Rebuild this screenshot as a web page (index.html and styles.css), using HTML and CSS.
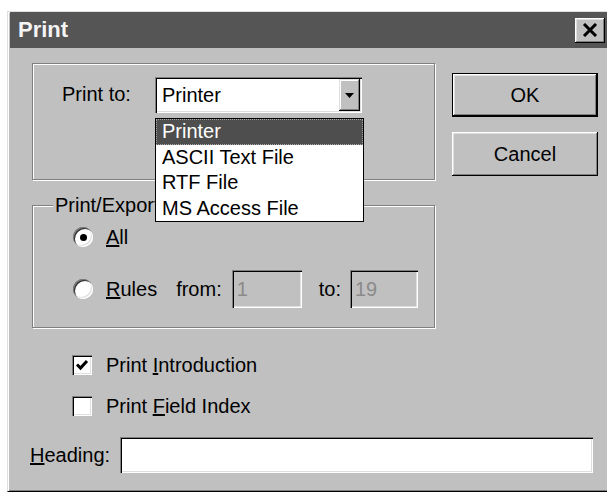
FILE: index.html
```html
<!DOCTYPE html>
<html lang="en">
<head>
<meta charset="utf-8">
<title>Print</title>
<link rel="stylesheet" href="styles.css">
</head>
<body>
<div class="dialog">
  <div class="titlebar">
    <span class="title">Print</span>
    <span class="close" aria-label="Close">
      <svg width="16" height="14" viewBox="0 0 16 14"><path d="M2 1 L14 13 M14 1 L2 13" stroke="#000" stroke-width="3" fill="none"/></svg>
    </span>
  </div>

  <div class="content">
    <div class="top-row">
      <div class="groups">
        <div class="group group-target">
          <span class="field-label">Print to:</span>
          <div class="combo">
            <span class="combo-value">Printer</span>
            <span class="combo-arrow">
              <svg width="9" height="5" viewBox="0 0 9 5"><polygon points="0,0 9,0 4.5,5" fill="#000"/></svg>
            </span>
            <ul class="combo-list">
              <li class="selected">Printer</li>
              <li>ASCII Text File</li>
              <li>RTF File</li>
              <li>MS Access File</li>
            </ul>
          </div>
        </div>

        <div class="group group-range">
          <span class="group-label">Print/Export</span>
          <div class="option-row">
            <span class="radio checked"></span>
            <span class="option-text"><u>A</u>ll</span>
          </div>
          <div class="option-row rules-row">
            <span class="radio"></span>
            <span class="option-text"><u>R</u>ules</span>
            <span class="from-label">from:</span>
            <span class="field field-disabled field-from">1</span>
            <span class="to-label">to:</span>
            <span class="field field-disabled field-to">19</span>
          </div>
        </div>
      </div>

      <div class="buttons">
        <span class="btn btn-default">OK</span>
        <span class="btn">Cancel</span>
      </div>
    </div>

    <div class="checks">
      <div class="check-row">
        <span class="checkbox">
          <svg width="14" height="14" viewBox="0 0 14 14"><polyline points="2,6.5 5.5,10 12,3" stroke="#000" stroke-width="3" fill="none"/></svg>
        </span>
        <span>Print <u>I</u>ntroduction</span>
      </div>
      <div class="check-row">
        <span class="checkbox"></span>
        <span>Print <u>F</u>ield Index</span>
      </div>
    </div>

    <div class="heading-row">
      <span class="heading-label"><u>H</u>eading:</span>
      <span class="field field-heading"></span>
    </div>
  </div>
</div>
</body>
</html>
```

FILE: styles.css
```css
* {
  box-sizing: border-box;
}

html,
body {
  margin: 0;
  overflow: hidden;
  background: #fff;
}

body {
  font-family: "Liberation Sans", Arial, sans-serif;
  font-size: 20px;
  color: #000;
}

/* window frame */
.dialog {
  width: 604px;
  height: 481px;
  margin: 11px 0 0 7px;
  padding: 0 2px;
  background: #c0c0c0;
  border: 1px solid;
  border-color: #dfdfdf #000 #000 #dfdfdf;
  box-shadow: inset 1px 1px 0 #fff, inset -1px -1px 0 #808080;
}

.titlebar {
  height: 36px;
  background: #555;
  display: flex;
  align-items: center;
  justify-content: space-between;
  padding: 0 3px 0 8px;
}

.title {
  color: #f4f4f4;
  font-weight: bold;
  font-size: 22px;
}

.close {
  width: 30px;
  height: 25px;
  display: flex;
  align-items: center;
  justify-content: center;
  background: #c0c0c0;
  box-shadow: inset -1px -1px 0 #000, inset 1px 1px 0 #fff,
    inset -2px -2px 0 #808080, inset 2px 2px 0 #dfdfdf;
}

/* body of the dialog */
.content {
  padding: 15px 0 0 22px;
}

.top-row {
  display: flex;
  align-items: flex-start;
  gap: 17px;
}

.groups {
  width: 403px;
  display: flex;
  flex-direction: column;
  gap: 25px;
}

/* etched group frame */
.group {
  position: relative;
  border: 1px solid #808080;
  box-shadow: inset 1px 1px 0 #fff, 1px 1px 0 #fff;
}

.group-target {
  height: 117px;
  padding: 13px 0 0 29px;
  display: flex;
  align-items: flex-start;
}

.field-label {
  width: 93px;
  line-height: 34px;
}

/* combo box */
.combo {
  position: relative;
  width: 207px;
  height: 36px;
  padding: 2px;
  display: flex;
  background: #fff;
  box-shadow: inset 1px 1px 0 #808080, inset 2px 2px 0 #000,
    inset -1px -1px 0 #fff, inset -2px -2px 0 #dfdfdf;
}

.combo-value {
  flex: 1;
  padding-left: 5px;
  line-height: 32px;
}

.combo-arrow {
  width: 21px;
  height: 32px;
  display: flex;
  align-items: center;
  justify-content: center;
  background: #c0c0c0;
  box-shadow: inset -1px -1px 0 #000, inset 1px 1px 0 #dfdfdf,
    inset -2px -2px 0 #808080, inset 2px 2px 0 #fff;
}

.combo-list {
  position: absolute;
  left: 0;
  top: 41px;
  width: 209px;
  margin: 0;
  padding: 0;
  list-style: none;
  background: #fff;
  border: 1px solid #000;
  z-index: 2;
}

.combo-list li {
  height: 25.5px;
  line-height: 25.5px;
  padding-left: 6px;
}

.combo-list li.selected {
  background: #4e4e4e;
  color: #fff;
  outline: 1px dotted #aaa;
  outline-offset: -1px;
}

/* range group */
.group-range {
  height: 123px;
  padding: 20px 0 0 40px;
}

.group-label {
  position: absolute;
  top: -12px;
  left: 20px;
  padding: 0 2px;
  line-height: 22px;
  background: #c0c0c0;
}

.option-row {
  display: flex;
  align-items: center;
  height: 22px;
}

.rules-row {
  height: 38px;
  margin-top: 22px;
}

.radio {
  width: 20px;
  height: 20px;
  flex: none;
  border-radius: 50%;
  display: flex;
  align-items: center;
  justify-content: center;
  background: #fff;
  box-shadow: inset 1px 1px 0 #808080, inset 2px 2px 0 #303030,
    inset -1px -1px 0 #fff, inset -2px -2px 0 #dfdfdf;
}

.radio.checked::after {
  content: "";
  width: 7px;
  height: 7px;
  border-radius: 50%;
  background: #000;
}

.option-text {
  margin-left: 13px;
}

.from-label {
  margin-left: 19px;
}

.to-label {
  margin-left: 17px;
}

/* sunken text fields */
.field {
  display: block;
  padding-left: 5px;
  background: #fff;
  box-shadow: inset 1px 1px 0 #808080, inset 2px 2px 0 #000,
    inset -1px -1px 0 #fff, inset -2px -2px 0 #dfdfdf;
}

.field-disabled {
  height: 38px;
  line-height: 38px;
  background: #c0c0c0;
  color: #8a8a8a;
}

.field-from {
  width: 70px;
  margin-left: 10px;
}

.field-to {
  width: 68px;
  margin-left: 9px;
}

/* buttons */
.buttons {
  margin-top: 10px;
  display: flex;
  flex-direction: column;
  gap: 15px;
}

.btn {
  width: 146px;
  height: 44px;
  display: flex;
  align-items: center;
  justify-content: center;
  background: #c0c0c0;
  box-shadow: inset -1px -1px 0 #000, inset 1px 1px 0 #fff,
    inset -2px -2px 0 #808080, inset 2px 2px 0 #dfdfdf;
}

.btn-default {
  border: 1px solid #000;
}

/* check boxes */
.checks {
  margin-top: 27px;
  padding-left: 40px;
  display: flex;
  flex-direction: column;
  gap: 21px;
}

.check-row {
  display: flex;
  align-items: center;
  gap: 14px;
  height: 20px;
}

.checkbox {
  width: 20px;
  height: 20px;
  display: flex;
  align-items: center;
  justify-content: center;
  background: #fff;
  box-shadow: inset 1px 1px 0 #808080, inset 2px 2px 0 #000,
    inset -1px -1px 0 #fff, inset -2px -2px 0 #dfdfdf;
}

/* heading row */
.heading-row {
  margin: 21px 0 0 -2px;
  display: flex;
  align-items: center;
}

.heading-label {
  width: 90px;
}

.field-heading {
  width: 473px;
  height: 36px;
}
```
